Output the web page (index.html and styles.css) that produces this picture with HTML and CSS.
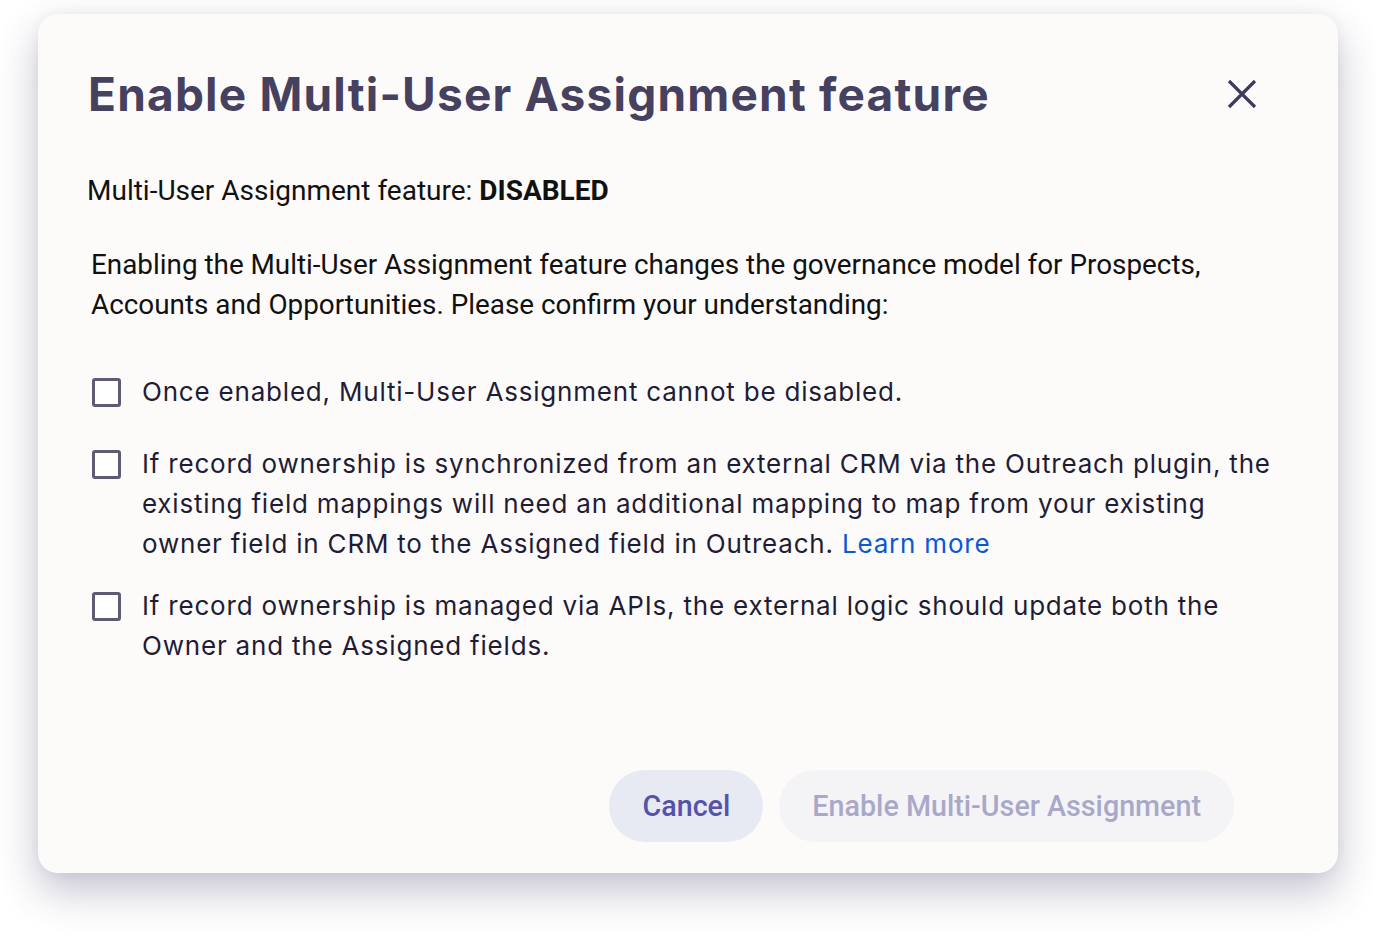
FILE: index.html
```html
<!DOCTYPE html>
<html lang="en">
<head>
    <meta charset="UTF-8">
    <meta name="viewport" content="width=device-width, initial-scale=1.0">
    <title>Enable Multi-User Assignment feature</title>
    <link rel="stylesheet" href="styles.css">
</head>
<body>
    <div class="modal">
        <div class="modal-header">
            <h1>Enable Multi-User Assignment feature</h1>
            <button class="close-button" aria-label="Close">
                <svg width="30" height="30" viewBox="0 0 30 30">
                    <path d="M2 2 L28 28 M28 2 L2 28" stroke="#3f3b60" stroke-width="3.2" fill="none"/>
                </svg>
            </button>
        </div>

        <p class="status">Multi-User Assignment feature: <strong>DISABLED</strong></p>

        <p class="intro">Enabling the Multi-User Assignment feature changes the governance model for Prospects, Accounts and Opportunities. Please confirm your understanding:</p>

        <div class="checklist">
            <label class="check-item first">
                <input type="checkbox">
                <span>Once enabled, Multi-User Assignment cannot be disabled.</span>
            </label>
            <label class="check-item">
                <input type="checkbox">
                <span>If record ownership is synchronized from an external CRM via the Outreach plugin, the existing field mappings will need an additional mapping to map from your existing owner field in CRM to the Assigned field in Outreach. <a href="#">Learn more</a></span>
            </label>
            <label class="check-item">
                <input type="checkbox">
                <span>If record ownership is managed via APIs, the external logic should update both the Owner and the Assigned fields.</span>
            </label>
        </div>

        <div class="modal-footer">
            <button class="btn btn-cancel">Cancel</button>
            <button class="btn btn-enable" disabled>Enable Multi-User Assignment</button>
        </div>
    </div>
</body>
</html>
```

FILE: styles.css
```css
html, body {
    margin: 0;
    min-height: 100%;
}

body {
    box-sizing: border-box;
    min-height: 936px;
    padding: 14px 38px;
    background-color: #ffffff;
    font-family: "Inter", "Open Sans", sans-serif;
}

.modal {
    box-sizing: border-box;
    width: 1300px;
    height: 859px;
    background-color: #fcfbfa;
    border-radius: 20px;
    box-shadow: 0 18px 40px rgba(60, 55, 100, 0.3), 0 0 12px rgba(60, 55, 100, 0.06);
    padding: 52px 50px 31px 50px;
    display: flex;
    flex-direction: column;
}

.modal-header {
    display: flex;
    align-items: center;
    justify-content: space-between;
}

.modal-header h1 {
    margin: 0;
    font-size: 46px;
    line-height: 56px;
    font-weight: 700;
    color: #46415f;
    letter-spacing: 1.2px;
}

.close-button {
    background: none;
    border: none;
    padding: 0;
    margin-right: 31px;
    width: 30px;
    height: 30px;
    cursor: pointer;
}

.status {
    margin: 49px 0 0 -1px;
    font-family: "Roboto", sans-serif;
    font-size: 28px;
    line-height: 40px;
    color: #111111;
}

.status strong {
    font-weight: 700;
}

.intro {
    margin: 34px 0 0 3px;
    font-family: "Roboto", sans-serif;
    font-size: 27.85px;
    line-height: 40px;
    color: #111111;
    max-width: 1140px;
}

.checklist {
    margin-top: 47px;
    display: flex;
    flex-direction: column;
    gap: 22px;
}

.check-item {
    display: flex;
    align-items: flex-start;
    gap: 21px;
    font-size: 26px;
    line-height: 40px;
    letter-spacing: 0.8px;
    color: #1f1d35;
    cursor: pointer;
}

.check-item.first {
    margin-bottom: 10px;
}

.check-item input {
    appearance: none;
    flex-shrink: 0;
    width: 29px;
    height: 29px;
    margin: 6px 0 0 4px;
    border: 3px solid #5f5b74;
    border-radius: 3px;
    background-color: #ffffff;
}

.check-item a {
    color: #0b58d1;
    text-decoration: none;
}

.modal-footer {
    margin-top: auto;
    display: flex;
    justify-content: flex-end;
    gap: 16px;
    padding-right: 54px;
}

.btn {
    height: 72px;
    border: none;
    border-radius: 36px;
    font-family: "Roboto", sans-serif;
    font-size: 28.7px;
    font-weight: 500;
    padding: 0 33px;
    cursor: pointer;
}

.btn-cancel {
    background-color: #e7e9f3;
    color: #5553a9;
}

.btn-enable {
    background-color: #f4f4f6;
    color: #aaa8c9;
    cursor: default;
}
```
